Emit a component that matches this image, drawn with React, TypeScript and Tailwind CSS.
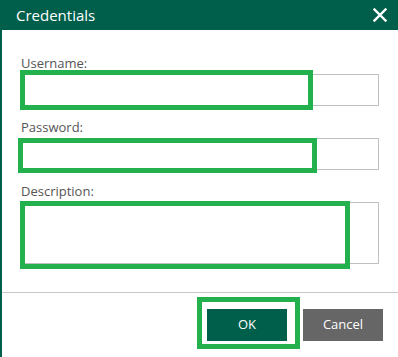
import React from "react";

export default function App() {
  return (
    <div className="relative w-[398px] h-[357px] overflow-hidden bg-white font-['Open_Sans',sans-serif]">
      <div className="flex h-[30px] items-center justify-between bg-[#005f4b] pl-[16px] pr-[12px]">
        <span className="text-[15px] leading-[20px] text-white">Credentials</span>
        <svg width="14" height="14" viewBox="0 0 14 14" className="mr-[-1px]">
          <path d="M1.5 1.5 L12.5 12.5 M12.5 1.5 L1.5 12.5" stroke="white" strokeWidth="2.4" strokeLinecap="square" />
        </svg>
      </div>
      <div className="flex h-[327px] flex-col border-l-2 border-[#005f4b]">
        <div className="flex flex-col pl-[19px] pr-[19px] pt-[24px] text-[13px] leading-[18px] text-[#555555]">
          <label className="h-[18px]">Username:</label>
          <input className="mt-[2px] h-[32px] border border-[#c0c0c0] bg-white outline-none" />
          <label className="mt-[12px] h-[18px]">Password:</label>
          <input type="password" className="mt-[2px] h-[32px] border border-[#c0c0c0] bg-white outline-none" />
          <label className="mt-[12px] h-[18px]">Description:</label>
          <textarea className="mt-[2px] h-[62px] resize-none border border-[#c0c0c0] bg-white outline-none" />
        </div>
        <div className="mt-[28px] border-t border-[#c8c8c8]" />
        <div className="flex justify-end gap-[16px] pr-[15px] pt-[16px]">
          <button className="h-[32px] w-[80px] bg-[#005f4b] text-[13px] text-white">OK</button>
          <button className="h-[32px] w-[80px] bg-[#666666] text-[13px] text-white">Cancel</button>
        </div>
      </div>

      <div className="pointer-events-none absolute left-[20px] top-[70px] h-[40px] w-[293px] border-[5px] border-[#22b14c]" />
      <div className="pointer-events-none absolute left-[18px] top-[138px] h-[35px] w-[299px] border-[5px] border-[#22b14c]" />
      <div className="pointer-events-none absolute left-[20px] top-[201px] h-[68px] w-[330px] border-[5px] border-[#22b14c]" />
      <div className="pointer-events-none absolute left-[197px] top-[297px] h-[52px] w-[103px] border-[5px] border-[#22b14c]" />
    </div>
  );
}
